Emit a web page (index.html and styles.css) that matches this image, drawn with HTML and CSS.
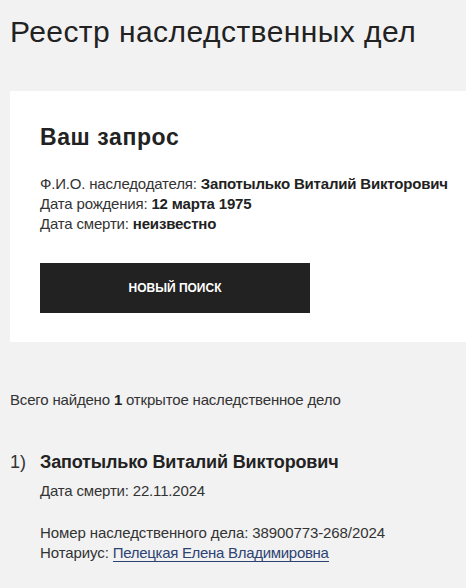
FILE: index.html
```html
<!DOCTYPE html>
<html lang="ru">
<head>
<meta charset="utf-8">
<title>Реестр наследственных дел</title>
<link rel="stylesheet" href="styles.css">
</head>
<body>
<main class="page">
  <h1 class="title">Реестр наследственных дел</h1>
  <section class="card">
    <h2 class="card-title">Ваш запрос</h2>
    <div class="query">
      <div>Ф.И.О. наследодателя: <b>Запотылько Виталий Викторович</b></div>
      <div>Дата рождения: <b>12 марта 1975</b></div>
      <div>Дата смерти: <b>неизвестно</b></div>
    </div>
    <button class="btn" type="button">НОВЫЙ ПОИСК</button>
  </section>
  <p class="found">Всего найдено <b>1</b> открытое наследственное дело</p>
  <ol class="results">
    <li class="result">
      <span class="num">1)</span>
      <div class="result-body">
        <div class="result-name">Запотылько Виталий Викторович</div>
        <div class="result-death">Дата смерти: 22.11.2024</div>
        <div class="result-info">
          <div>Номер наследственного дела: 38900773-268/2024</div>
          <div>Нотариус: <a class="link" href="#">Пелецкая Елена Владимировна</a></div>
        </div>
      </div>
    </li>
  </ol>
</main>
</body>
</html>
```

FILE: styles.css
```css
html, body {
  margin: 0;
  padding: 0;
  background: #f2f2f2;
}
body {
  font-family: "Liberation Sans", Arial, sans-serif;
  color: #333;
  overflow: hidden;
}
.page {
  padding-left: 10px;
}
.title {
  margin: 14px 0 0;
  font-size: 30px;
  letter-spacing: 0.45px;
  line-height: 36px;
  font-weight: normal;
  color: #222;
}
.card {
  margin-top: 41px;
  background: #fff;
  padding: 33px 0 29px 30px;
}
.card-title {
  margin: 0;
  font-size: 23px;
  letter-spacing: 0.6px;
  line-height: 26px;
  font-weight: bold;
  color: #222;
}
.query {
  margin-top: 24px;
  font-size: 15px;
  letter-spacing: -0.18px;
  line-height: 20px;
  white-space: nowrap;
}
.query b {
  color: #222;
}
.btn {
  display: flex;
  align-items: center;
  justify-content: center;
  margin-top: 29px;
  width: 270px;
  height: 50px;
  border: 0;
  padding: 0;
  background: #222;
  color: #fff;
  font-family: inherit;
  font-size: 12px;
  font-weight: bold;
}
.found {
  margin: 48px 0 0;
  font-size: 15px;
  letter-spacing: -0.18px;
  line-height: 20px;
}
.found b {
  color: #222;
}
.results {
  list-style: none;
  margin: 40px 0 0;
  padding: 0;
}
.result {
  display: flex;
}
.num {
  width: 30px;
  font-size: 18px;
  line-height: 24px;
}
.result-name {
  font-size: 18px;
  letter-spacing: -0.15px;
  line-height: 24px;
  font-weight: bold;
  color: #222;
}
.result-death {
  margin-top: 7px;
  font-size: 15px;
  letter-spacing: -0.18px;
  line-height: 20px;
}
.result-info {
  margin-top: 22px;
  font-size: 15px;
  letter-spacing: -0.1px;
  line-height: 20px;
}
.link {
  color: #2d4373;
  text-decoration: none;
  border-bottom: 1px solid #2d4373;
  letter-spacing: -0.3px;
}
```
